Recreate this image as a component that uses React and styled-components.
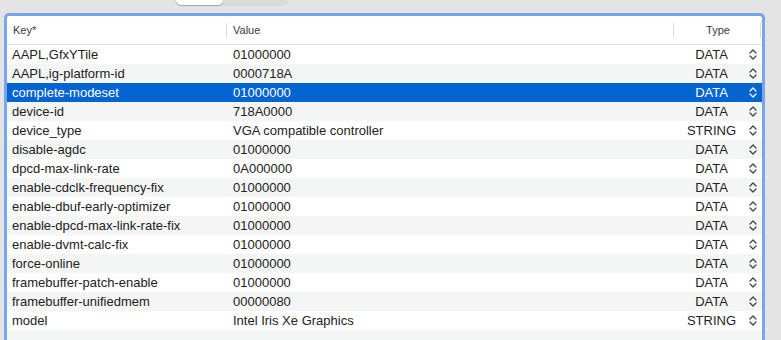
import React from "react";
import styled, { createGlobalStyle } from "styled-components";

const GlobalStyle = createGlobalStyle`
  html, body {
    margin: 0;
    padding: 0;
    background: #e4e4e4;
    overflow: hidden;
  }
  body {
    font-family: "Liberation Sans", Arial, sans-serif;
    -webkit-font-smoothing: antialiased;
  }
`;

const Page = styled.div`
  width: 781px;
  height: 340px;
  padding-left: 4px;
  box-sizing: border-box;
  overflow: hidden;
`;

const Toolbar = styled.div`
  height: 13px;
  display: flex;
  padding-left: 171px;
`;

const Segmented = styled.div`
  display: flex;
  height: 20px;
  margin-top: -14px;
  background: #d9d9d9;
  border-radius: 6px;
  padding: 1px;
  box-sizing: border-box;
`;

const Segment = styled.div`
  width: ${(p) => p.$w}px;
  font-size: 12px;
  display: flex;
  align-items: center;
  justify-content: center;
  color: #222;
  border-radius: 5px;
  background: ${(p) => (p.$active ? "#ffffff" : "transparent")};
  box-shadow: ${(p) => (p.$active ? "0 0.5px 1px rgba(0,0,0,0.25)" : "none")};
`;

const Frame = styled.div`
  width: 761px;
  height: 330px;
  box-sizing: border-box;
  border: 3px solid #78a6e8;
  border-bottom: none;
  border-radius: 5px 5px 0 0;
  background: #ffffff;
  overflow: hidden;
`;

const Grid = styled.div`
  display: grid;
  grid-template-columns: 220px 447px 88px;
`;

const HeaderRow = styled.div`
  display: contents;
`;

const HeadCell = styled.div`
  height: 28px;
  border-bottom: 1px solid #e2e2e2;
  display: flex;
  align-items: center;
  justify-content: ${(p) => (p.$center ? "center" : "flex-start")};
  padding-left: ${(p) => (p.$center ? 0 : p.$pad)}px;
  font-size: 11px;
  color: #3a3a3a;
  position: relative;
  &::after {
    content: "";
    position: absolute;
    right: ${(p) => (p.$last ? 1 : 0)}px;
    top: 7px;
    height: 15px;
    width: 1px;
    background: ${(p) => (p.$noSep ? "transparent" : "#dcdcdc")};
  }
`;

const Row = styled.div`
  display: contents;
`;

const Cell = styled.div`
  height: 19px;
  display: flex;
  align-items: center;
  font-size: 13px;
  padding-left: ${(p) => p.$pad}px;
  background: ${(p) =>
    p.$selected ? "#0364d2" : p.$striped ? "#f4f5f5" : "#ffffff"};
  color: ${(p) => (p.$selected ? "#ffffff" : "#222222")};
  white-space: nowrap;
`;

const TypeCell = styled(Cell)`
  padding-left: 0;
  justify-content: space-between;
`;

const TypeLabel = styled.span`
  width: 76px;
  text-align: center;
`;

const Stepper = styled.svg`
  width: 8px;
  height: 11px;
  margin-right: 5px;
  flex: none;
`;

const rows = [
  ["AAPL,GfxYTile", "01000000", "DATA"],
  ["AAPL,ig-platform-id", "0000718A", "DATA"],
  ["complete-modeset", "01000000", "DATA"],
  ["device-id", "718A0000", "DATA"],
  ["device_type", "VGA compatible controller", "STRING"],
  ["disable-agdc", "01000000", "DATA"],
  ["dpcd-max-link-rate", "0A000000", "DATA"],
  ["enable-cdclk-frequency-fix", "01000000", "DATA"],
  ["enable-dbuf-early-optimizer", "01000000", "DATA"],
  ["enable-dpcd-max-link-rate-fix", "01000000", "DATA"],
  ["enable-dvmt-calc-fix", "01000000", "DATA"],
  ["force-online", "01000000", "DATA"],
  ["framebuffer-patch-enable", "01000000", "DATA"],
  ["framebuffer-unifiedmem", "00000080", "DATA"],
  ["model", "Intel Iris Xe Graphics", "STRING"],
  ["", "", ""],
];

function Chevrons({ color }) {
  return (
    <Stepper viewBox="0 0 8 11">
      <path
        d="M1 4 L4 1 L7 4 M1 7 L4 10 L7 7"
        fill="none"
        stroke={color}
        strokeWidth="1.3"
        strokeLinecap="round"
        strokeLinejoin="round"
      />
    </Stepper>
  );
}

export default function App() {
  const selected = 2;
  return (
    <Page>
      <GlobalStyle />
      <Toolbar>
        <Segmented>
          <Segment $w={47} $active>
            Add
          </Segment>
          <Segment $w={64}>Delete</Segment>
        </Segmented>
      </Toolbar>
      <Frame>
        <Grid>
          <HeaderRow>
            <HeadCell $pad={6}>Key*</HeadCell>
            <HeadCell $pad={6}>Value</HeadCell>
            <HeadCell $center $last>
              Type
            </HeadCell>
          </HeaderRow>
          {rows.map(([key, value, type], i) => {
            const sel = i === selected;
            const striped = i % 2 === 1;
            return (
              <Row key={i}>
                <Cell $pad={5} $selected={sel} $striped={striped}>
                  {key}
                </Cell>
                <Cell $pad={6} $selected={sel} $striped={striped}>
                  {value}
                </Cell>
                <TypeCell $selected={sel} $striped={striped}>
                  <TypeLabel>{type}</TypeLabel>
                  {type && <Chevrons color={sel ? "#ffffff" : "#444444"} />}
                </TypeCell>
              </Row>
            );
          })}
        </Grid>
      </Frame>
    </Page>
  );
}
